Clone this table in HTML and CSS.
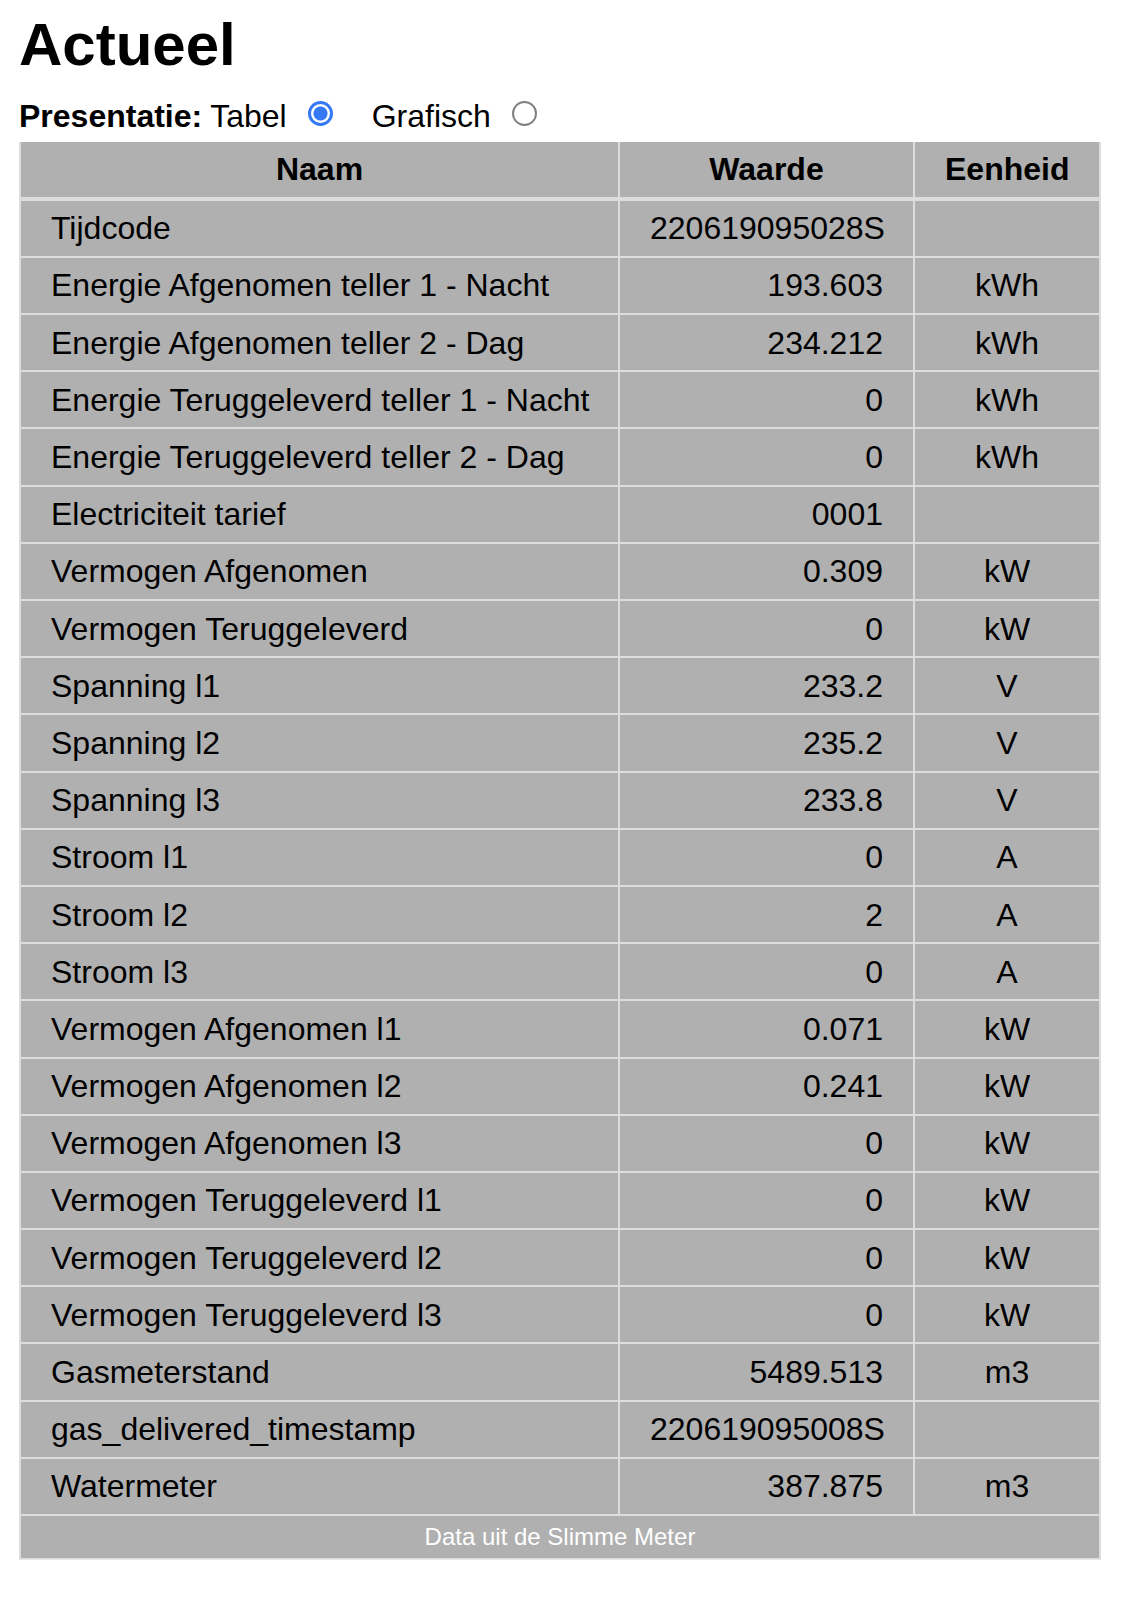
FILE: index.html
```html
<!DOCTYPE html>
<html lang="nl">
<head>
<meta charset="utf-8">
<title>Actueel</title>
<link rel="stylesheet" href="styles.css">
</head>
<body>
<h1 class="title">Actueel</h1>
<div class="presentatie">
  <span class="lbl">Presentatie:</span>
  <label class="opt opt-first">Tabel <input type="radio" name="pres" value="tabel" checked></label>
  <label class="opt opt-second">Grafisch <input type="radio" name="pres" value="grafisch"></label>
</div>
<table class="data">
  <colgroup>
    <col class="c-naam">
    <col class="c-waarde">
    <col class="c-eenheid">
  </colgroup>
  <thead>
    <tr><th>Naam</th><th>Waarde</th><th>Eenheid</th></tr>
  </thead>
  <tbody>
    <tr><td class="naam">Tijdcode</td><td class="waarde">220619095028S</td><td class="eenheid"></td></tr>
    <tr><td class="naam">Energie Afgenomen teller 1 - Nacht</td><td class="waarde">193.603</td><td class="eenheid">kWh</td></tr>
    <tr><td class="naam">Energie Afgenomen teller 2 - Dag</td><td class="waarde">234.212</td><td class="eenheid">kWh</td></tr>
    <tr><td class="naam">Energie Teruggeleverd teller 1 - Nacht</td><td class="waarde">0</td><td class="eenheid">kWh</td></tr>
    <tr><td class="naam">Energie Teruggeleverd teller 2 - Dag</td><td class="waarde">0</td><td class="eenheid">kWh</td></tr>
    <tr><td class="naam">Electriciteit tarief</td><td class="waarde">0001</td><td class="eenheid"></td></tr>
    <tr><td class="naam">Vermogen Afgenomen</td><td class="waarde">0.309</td><td class="eenheid">kW</td></tr>
    <tr><td class="naam">Vermogen Teruggeleverd</td><td class="waarde">0</td><td class="eenheid">kW</td></tr>
    <tr><td class="naam">Spanning l1</td><td class="waarde">233.2</td><td class="eenheid">V</td></tr>
    <tr><td class="naam">Spanning l2</td><td class="waarde">235.2</td><td class="eenheid">V</td></tr>
    <tr><td class="naam">Spanning l3</td><td class="waarde">233.8</td><td class="eenheid">V</td></tr>
    <tr><td class="naam">Stroom l1</td><td class="waarde">0</td><td class="eenheid">A</td></tr>
    <tr><td class="naam">Stroom l2</td><td class="waarde">2</td><td class="eenheid">A</td></tr>
    <tr><td class="naam">Stroom l3</td><td class="waarde">0</td><td class="eenheid">A</td></tr>
    <tr><td class="naam">Vermogen Afgenomen l1</td><td class="waarde">0.071</td><td class="eenheid">kW</td></tr>
    <tr><td class="naam">Vermogen Afgenomen l2</td><td class="waarde">0.241</td><td class="eenheid">kW</td></tr>
    <tr><td class="naam">Vermogen Afgenomen l3</td><td class="waarde">0</td><td class="eenheid">kW</td></tr>
    <tr><td class="naam">Vermogen Teruggeleverd l1</td><td class="waarde">0</td><td class="eenheid">kW</td></tr>
    <tr><td class="naam">Vermogen Teruggeleverd l2</td><td class="waarde">0</td><td class="eenheid">kW</td></tr>
    <tr><td class="naam">Vermogen Teruggeleverd l3</td><td class="waarde">0</td><td class="eenheid">kW</td></tr>
    <tr><td class="naam">Gasmeterstand</td><td class="waarde">5489.513</td><td class="eenheid">m3</td></tr>
    <tr><td class="naam">gas_delivered_timestamp</td><td class="waarde">220619095008S</td><td class="eenheid"></td></tr>
    <tr><td class="naam">Watermeter</td><td class="waarde">387.875</td><td class="eenheid">m3</td></tr>
  </tbody>
  <tfoot>
    <tr><td class="footer" colspan="3">Data uit de Slimme Meter</td></tr>
  </tfoot>
</table>
</body>
</html>
```

FILE: styles.css
```css
html, body {
  margin: 0;
  padding: 0;
  background: #ffffff;
}

body {
  padding: 0 19px;
  font-family: "Liberation Sans", Arial, Helvetica, sans-serif;
  color: #000000;
}

.title {
  margin: 10px 0 0;
  font-size: 60px;
  line-height: 70px;
  font-weight: bold;
}

.presentatie {
  margin-top: 18px;
  display: flex;
  align-items: center;
  font-size: 32px;
  line-height: 36px;
  height: 36px;
}

.lbl {
  font-weight: bold;
}

.opt {
  display: flex;
  align-items: center;
}

.opt-first {
  margin-left: 8px;
}

.opt-second {
  margin-left: 39px;
}

.opt input {
  appearance: none;
  -webkit-appearance: none;
  margin: 0 0 0 21px;
  width: 25px;
  height: 25px;
  border-radius: 50%;
  box-sizing: border-box;
  border: 2px solid #808080;
  background: #ffffff;
  position: relative;
  top: -3px;
}

.opt input:checked {
  border: 3px solid #3478f6;
  background: radial-gradient(circle, #3478f6 0 6.5px, #ffffff 7.5px);
}

.data {
  margin-top: 6px;
  width: 1082px;
  table-layout: fixed;
  border-collapse: separate;
  border-spacing: 2px;
  background: #dddddd;
  clip-path: inset(2px 0 0 0);
  font-size: 32px;
}

.c-naam { width: 597px; }
.c-waarde { width: 293px; }
.c-eenheid { width: 184px; }

.data th,
.data td {
  box-sizing: border-box;
  background: #b0b0b0;
  vertical-align: middle;
  line-height: 36px;
  padding: 0 30px;
  white-space: nowrap;
}

.data th {
  height: 56.7px;
  font-weight: bold;
  text-align: center;
  border-bottom: 2px solid #dddddd;
}

.data td {
  height: 55.2px;
  font-weight: normal;
}

.data td.naam { text-align: left; }
.data td.waarde { text-align: right; }
.data td.eenheid { text-align: center; padding: 0; }

.data td.footer {
  height: 41.7px;
  font-size: 24px;
  line-height: 28px;
  color: #ffffff;
  text-align: center;
  padding: 0;
}
```
